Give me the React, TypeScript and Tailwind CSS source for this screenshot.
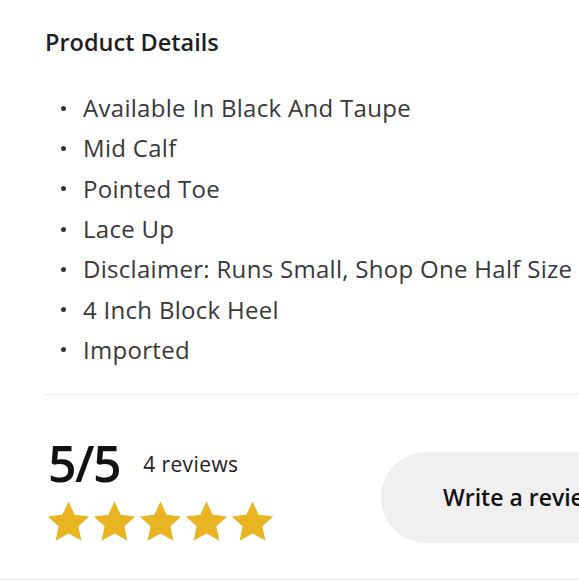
import React from 'react';

const details = [
  'Available In Black And Taupe',
  'Mid Calf',
  'Pointed Toe',
  'Lace Up',
  'Disclaimer: Runs Small, Shop One Half Size',
  '4 Inch Block Heel',
  'Imported',
];

const Star = () => (
  <svg width="45" height="43" viewBox="0 0 24 23" className="shrink-0">
    <path
      d="M12 0.8l3.3 7.1 7.8 0.9-5.8 5.3 1.6 7.7L12 17.9l-6.9 3.9 1.6-7.7L0.9 8.8l7.8-0.9z"
      fill="#e8b422"
    />
  </svg>
);

export default function App() {
  return (
    <div className="w-[579px] h-[580px] overflow-hidden bg-white font-['Open_Sans',sans-serif] border-b border-[#e5e5e5]">
      <div className="pl-[45px] pt-[27px]">
        <h2 className="text-[23.5px] font-semibold text-[#1f1f1f] leading-[30px]">Product Details</h2>

        <ul className="mt-[31px] flex flex-col">
          {details.map((d) => (
            <li key={d} className="flex items-center h-[40.3px] text-[24px] tracking-[0.3px] text-[#383838] whitespace-nowrap">
              <span className="w-[5px] h-[5px] rounded-full bg-[#333] ml-[16px] mr-[17px] shrink-0" />
              {d}
            </li>
          ))}
        </ul>

        <div className="mt-[24px] border-t border-[#ececec]" />

        <div className="flex items-start">
          <div className="pl-[1px] pt-[38px]">
            <div className="flex items-center gap-[23px] pl-[2px]">
              <span className="text-[50px] font-semibold leading-[60px] tracking-[-1.5px] text-[#111]">5/5</span>
              <span className="text-[21px] tracking-[0.4px] text-[#222] pt-[3px]">4 reviews</span>
            </div>
            <div className="flex gap-[1px] mt-[7px]">
              <Star />
              <Star />
              <Star />
              <Star />
              <Star />
            </div>
          </div>
          <div className="ml-auto mt-[57px] w-[198px] h-[91px] rounded-l-full bg-[#efefef] flex items-center pl-[62px] whitespace-nowrap overflow-hidden">
            <span className="text-[23px] font-semibold text-[#111]">Write a review</span>
          </div>
        </div>
      </div>
    </div>
  );
}
